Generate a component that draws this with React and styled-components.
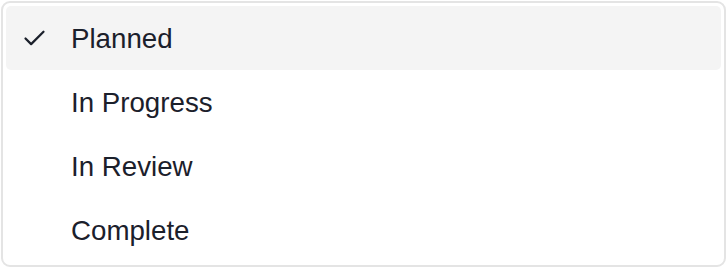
import React from "react";
import styled, { createGlobalStyle } from "styled-components";

const Global = createGlobalStyle`
  html, body {
    margin: 0;
    padding: 0;
    background: #ffffff;
  }
  body {
    font-family: "Liberation Sans", Arial, sans-serif;
  }
`;

const Page = styled.div`
  padding: 1px;
`;

const Menu = styled.ul`
  list-style: none;
  margin: 0;
  width: 725px;
  box-sizing: border-box;
  border: 2px solid #e4e4e4;
  border-radius: 9px;
  padding: 3px;
  background: #ffffff;
`;

const Item = styled.li`
  display: flex;
  align-items: center;
  height: 64px;
  padding-left: 15px;
  border-radius: 5px;
  background: ${(p) => (p.$active ? "#f4f4f4" : "transparent")};
  color: #1b202b;
  font-size: 27.7px;
`;

const Label = styled.span`
  display: block;
  padding-top: 2px;
`;

const IconSlot = styled.span`
  display: flex;
  width: 27px;
  height: 27px;
  margin-right: 23px;
`;

const Check = () => (
  <svg width="27" height="27" viewBox="0 0 24 24" fill="none" stroke="#1b202b" strokeWidth="2" strokeLinecap="round" strokeLinejoin="round">
    <path d="M20 6 9 17l-5-5" />
  </svg>
);

const options = ["Planned", "In Progress", "In Review", "Complete"];

export default function App() {
  const selected = "Planned";
  return (
    <Page>
      <Global />
      <Menu>
        {options.map((o) => (
          <Item key={o} $active={o === selected}>
            <IconSlot>{o === selected && <Check />}</IconSlot>
            <Label>{o}</Label>
          </Item>
        ))}
      </Menu>
    </Page>
  );
}
